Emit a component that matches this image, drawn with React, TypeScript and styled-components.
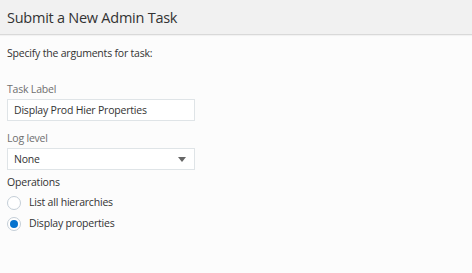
import styled, { createGlobalStyle } from 'styled-components';

const GlobalStyle = createGlobalStyle`
  html, body {
    margin: 0;
    padding: 0;
    background: #fcfcfc;
  }
  body {
    font-family: 'Open Sans', 'Noto Sans', Arial, sans-serif;
    color: #333;
  }
`;

const Page = styled.div`
  width: 472px;
  height: 273px;
  display: flex;
  flex-direction: column;
  background: #fcfcfc;
`;

const Header = styled.div`
  height: 34px;
  display: flex;
  align-items: center;
  padding: 0 7px;
  background: #f1f1f1;
  border-bottom: 1px solid #d9d9d9;
  box-shadow: 0 1px 1px rgba(0, 0, 0, 0.04);
`;

const Title = styled.h1`
  margin: 0;
  font-size: 14.5px;
  font-weight: 400;
  letter-spacing: -0.25px;
  color: #333;
`;

const Body = styled.div`
  display: flex;
  flex-direction: column;
  padding: 11px 7px;
  font-size: 10.5px;
  line-height: 15px;
  letter-spacing: -0.2px;
`;

const Intro = styled.p`
  margin: 0 0 21px;
  color: #333;
`;

const Field = styled.div<{ $spacing?: number }>`
  display: flex;
  flex-direction: column;
  width: 188px;
  margin-bottom: ${({ $spacing = 10 }) => $spacing}px;
`;

const Label = styled.label<{ $dark?: boolean }>`
  color: ${({ $dark }) => ($dark ? '#333' : '#6f6f6f')};
  margin-bottom: 2px;
`;

const TextBox = styled.div`
  height: 22px;
  box-sizing: border-box;
  border: 1px solid #dfe4e7;
  background: #fff;
  display: flex;
  align-items: center;
  padding: 0 6px;
  color: #333;
`;

const SelectBox = styled(TextBox)`
  justify-content: space-between;
  padding-right: 8px;
`;

const Caret = styled.span`
  width: 0;
  height: 0;
  border-left: 4px solid transparent;
  border-right: 4px solid transparent;
  border-top: 5px solid #666;
`;

const RadioGroup = styled.div`
  display: flex;
  flex-direction: column;
`;

const RadioRow = styled.div`
  display: flex;
  align-items: center;
  gap: 8px;
  height: 21px;
  color: #333;
`;

const Radio = styled.span<{ $checked?: boolean }>`
  width: 14px;
  height: 14px;
  box-sizing: border-box;
  border-radius: 50%;
  border: 1px solid #c4ced7;
  background: #fff;
  display: flex;
  align-items: center;
  justify-content: center;

  &::after {
    content: '';
    width: 8px;
    height: 8px;
    border-radius: 50%;
    background: ${({ $checked }) => ($checked ? '#0572ce' : 'transparent')};
  }
`;

export default function App() {
  return (
    <>
      <GlobalStyle />
      <Page>
        <Header>
          <Title>Submit a New Admin Task</Title>
        </Header>
        <Body>
          <Intro>Specify the arguments for task:</Intro>
          <Field>
            <Label>Task Label</Label>
            <TextBox>Display Prod Hier Properties</TextBox>
          </Field>
          <Field $spacing={5}>
            <Label>Log level</Label>
            <SelectBox>
              None
              <Caret />
            </SelectBox>
          </Field>
          <Label $dark>Operations</Label>
          <RadioGroup>
            <RadioRow>
              <Radio />
              List all hierarchies
            </RadioRow>
            <RadioRow>
              <Radio $checked />
              Display properties
            </RadioRow>
          </RadioGroup>
        </Body>
      </Page>
    </>
  );
}
